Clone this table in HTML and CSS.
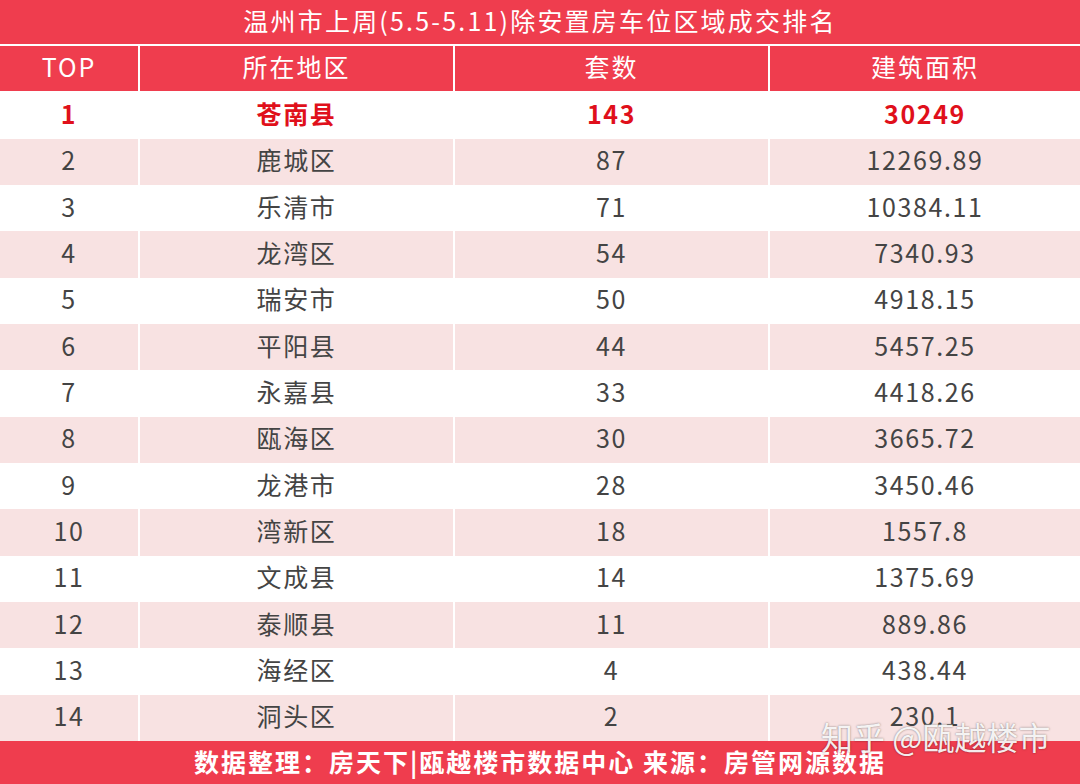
FILE: index.html
```html
<!DOCTYPE html>
<html lang="zh">
<head>
<meta charset="utf-8">
<title>温州市上周除安置房车位区域成交排名</title>
<link rel="stylesheet" href="styles.css">
</head>
<body>
<div class="page">
  <div class="title">温州市上周(5.5-5.11)除安置房车位区域成交排名</div>
  <div class="table">
    <div class="row head"><div>TOP</div><div>所在地区</div><div>套数</div><div>建筑面积</div></div>
    <div class="row top1"><div>1</div><div>苍南县</div><div>143</div><div>30249</div></div>
    <div class="row pink"><div>2</div><div>鹿城区</div><div>87</div><div>12269.89</div></div>
    <div class="row"><div>3</div><div>乐清市</div><div>71</div><div>10384.11</div></div>
    <div class="row pink"><div>4</div><div>龙湾区</div><div>54</div><div>7340.93</div></div>
    <div class="row"><div>5</div><div>瑞安市</div><div>50</div><div>4918.15</div></div>
    <div class="row pink"><div>6</div><div>平阳县</div><div>44</div><div>5457.25</div></div>
    <div class="row"><div>7</div><div>永嘉县</div><div>33</div><div>4418.26</div></div>
    <div class="row pink"><div>8</div><div>瓯海区</div><div>30</div><div>3665.72</div></div>
    <div class="row"><div>9</div><div>龙港市</div><div>28</div><div>3450.46</div></div>
    <div class="row pink"><div>10</div><div>湾新区</div><div>18</div><div>1557.8</div></div>
    <div class="row"><div>11</div><div>文成县</div><div>14</div><div>1375.69</div></div>
    <div class="row pink"><div>12</div><div>泰顺县</div><div>11</div><div>889.86</div></div>
    <div class="row"><div>13</div><div>海经区</div><div>4</div><div>438.44</div></div>
    <div class="row pink"><div>14</div><div>洞头区</div><div>2</div><div>230.1</div></div>
  </div>
  <div class="footer">数据整理：房天下|瓯越楼市数据中心 来源：房管网源数据</div>
  <div class="watermark">知乎 @瓯越楼市</div>
</div>
</body>
</html>
```
FILE: styles.css
```css
html, body {
  margin: 0;
  padding: 0;
  background: #ffffff;
}
.page {
  position: relative;
  width: 1080px;
  height: 784px;
  overflow: hidden;
  font-family: "Noto Sans CJK SC", "Noto Sans", sans-serif;
  background: #ffffff;
}
.title {
  height: 44px;
  background: #ef3d4e;
  color: #ffffff;
  font-size: 25px;
  letter-spacing: 2.2px;
  display: flex;
  align-items: center;
  justify-content: center;
  padding-bottom: 4px;
  box-sizing: border-box;
  margin-bottom: 2px;
}
.table {
  display: grid;
  grid-template-rows: repeat(15, 1fr);
  height: 695px;
}
.row {
  display: grid;
  grid-template-columns: 138px 313px 313px 1fr;
  column-gap: 2px;
  background: #ffffff;
}
.row > div {
  display: flex;
  align-items: center;
  justify-content: center;
  font-size: 25px;
  letter-spacing: 1.6px;
  color: #444444;
  background: #ffffff;
  padding-bottom: 5px;
  box-sizing: border-box;
}
.row.head > div {
  background: #ef3d4e;
  color: #ffffff;
  letter-spacing: 2px;
}
.row.head {
  padding-bottom: 1px;
}
.row.pink > div {
  background: #f8e2e2;
}
.row.top1 > div {
  color: #e0101b;
  font-weight: 700;
}
.footer {
  height: 43px;
  background: #ef3d4e;
  color: #ffffff;
  font-size: 25px;
  font-weight: 700;
  letter-spacing: 2px;
  display: flex;
  align-items: center;
  justify-content: center;
  padding-bottom: 4px;
  box-sizing: border-box;
}
.watermark {
  position: absolute;
  left: 821px;
  top: 720px;
  font-size: 32px;
  line-height: 1;
  color: rgba(255, 255, 255, 0.92);
  text-shadow: 0 0 2px rgba(0, 0, 0, 0.5);
  white-space: nowrap;
}
```
